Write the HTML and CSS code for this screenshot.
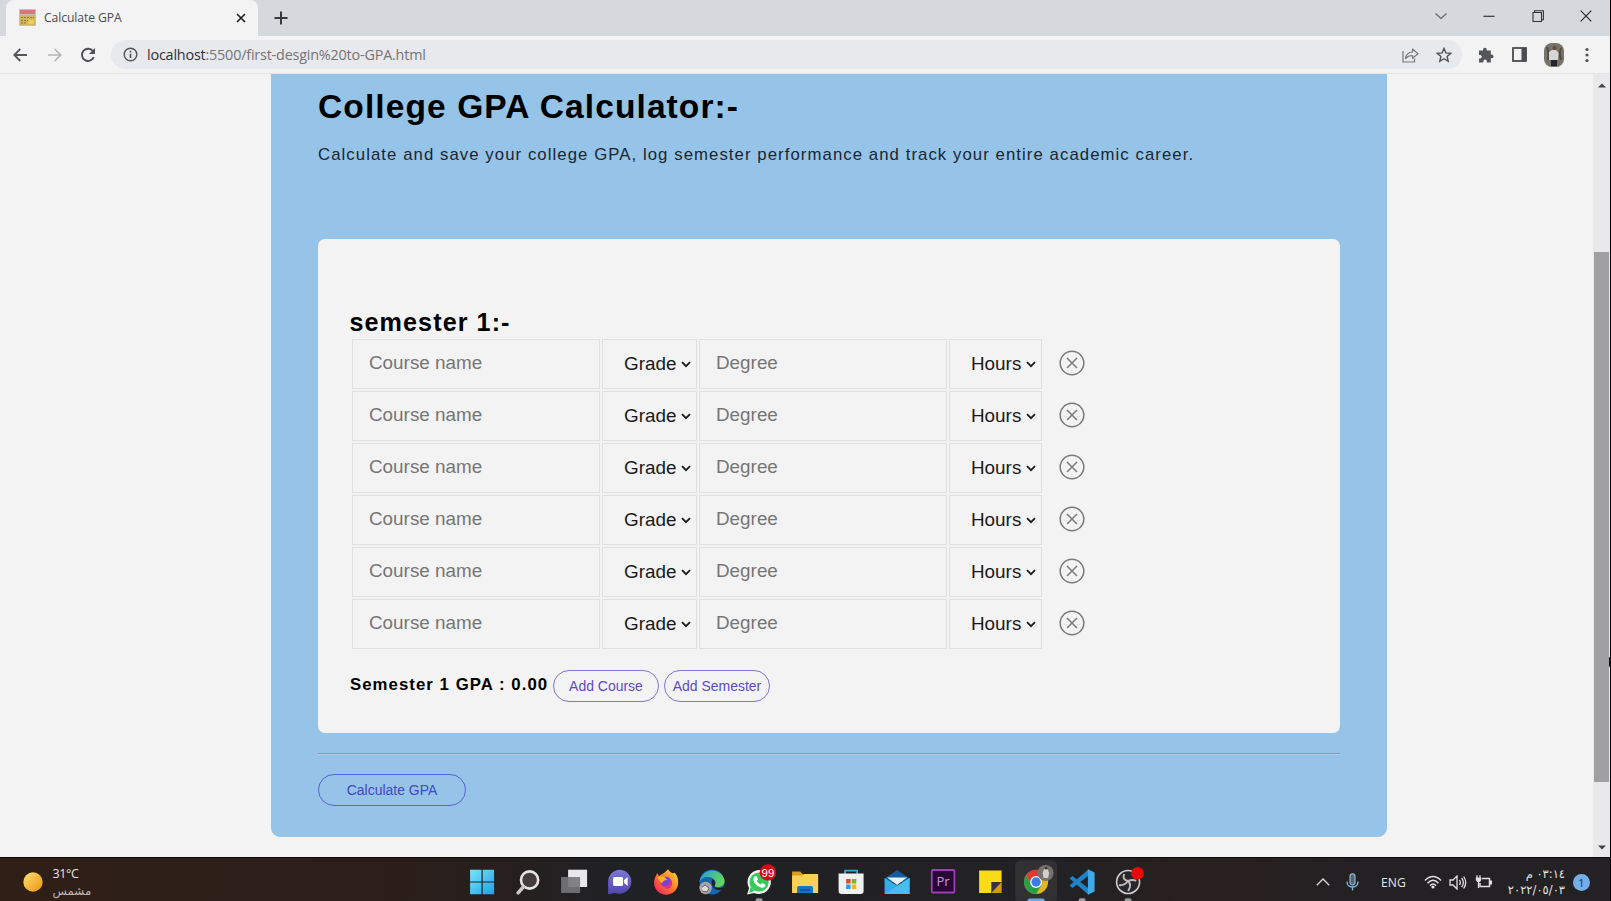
FILE: index.html
```html
<!DOCTYPE html>
<html lang="en">
<head>
<meta charset="utf-8">
<title>Calculate GPA</title>
<link rel="stylesheet" href="styles.css">
</head>
<body>
<div class="screen">
  <header class="tabs">
    <div class="tab">
      <svg class="favicon" width="17" height="17" viewBox="0 0 17 17"><rect width="17" height="17" rx="1" fill="#c9c0aa"/><rect x="1" y="1" width="15" height="4" fill="#d87583"/><path d="M1 6h15v10H1z" fill="#d3b75c"/><path d="M2 8.500h13M2 11.500h7M2 14h6" stroke="#8d7440" stroke-width="1.200" stroke-dasharray="2 1"/><rect x="9.500" y="11" width="5" height="4" fill="#f0cf58"/></svg>
      <span class="tab-title">Calculate GPA</span>
      <svg width="10" height="10" viewBox="0 0 10 10"><path d="M1 1l8 8M9 1l-8 8" stroke="#222" stroke-width="1.700"/></svg>
    </div>
    <svg class="plus" width="14" height="14" viewBox="0 0 14 14"><path d="M7 .5v13M.5 7h13" stroke="#38393c" stroke-width="2"/></svg>
    <div class="window-buttons">
      <svg width="12" height="12" viewBox="0 0 12 12"><path d="M.5 3.500l5.500 5 5.500-5" fill="none" stroke="#666" stroke-width="1.200"/></svg>
      <svg width="12" height="12" viewBox="0 0 12 12"><path d="M.5 6.300h11" stroke="#333" stroke-width="1.200"/></svg>
      <svg width="12" height="12" viewBox="0 0 12 12"><path d="M1 2.500h8.500v9H1zM2.500 2.500V.7H11.400v9H9.500" fill="none" stroke="#333" stroke-width="1.100"/></svg>
      <svg width="12" height="12" viewBox="0 0 12 12"><path d="M.7.7l10.600 10.600M11.300.7L.7 11.300" stroke="#222" stroke-width="1.100"/></svg>
    </div>
  </header>
  <nav class="toolbar">
    <svg class="back" width="15" height="14" viewBox="0 0 15 14"><path d="M14 7H1.500M7.300 1L1.300 7l6 6" fill="none" stroke="#55565a" stroke-width="1.800"/></svg>
    <svg class="forward" width="15" height="14" viewBox="0 0 15 14"><path d="M1 7h12.500M7.700 1l6 6-6 6" fill="none" stroke="#b4b5b8" stroke-width="1.700"/></svg>
    <svg class="reload" width="16" height="16" viewBox="0 0 16 16"><path d="M13.700 10.200A6.100 6.100 0 1 1 13 4.200" fill="none" stroke="#505155" stroke-width="1.900"/><path d="M15 1v6H9z" fill="#505155"/></svg>
    <div class="omnibox">
      <svg width="15" height="15" viewBox="0 0 15 15"><circle cx="7.500" cy="7.500" r="6.300" fill="none" stroke="#55565a" stroke-width="1.500"/><path d="M7.500 6.700v4.300M7.500 3.700v1.700" stroke="#55565a" stroke-width="1.700"/></svg>
      <span class="url"><b>localhost</b>:5500/first-desgin%20to-GPA.html</span>
      <svg class="share" width="17" height="16" viewBox="0 0 17 16"><path d="M1 4v11h11.500v-3.500" fill="none" stroke="#77787b" stroke-width="1.200"/><path d="M3.500 11.500C4 7.500 6.500 5.200 10.500 5V2l5.500 4.700-5.500 4.600V8.500C7.200 8.500 5.200 9.500 3.500 11.500z" fill="none" stroke="#77787b" stroke-width="1.200" stroke-linejoin="round"/></svg>
      <svg width="16" height="16" viewBox="0 0 16 16"><path d="M8 1.400l1.900 4.500 4.900.4-3.700 3.200 1.100 4.800L8 11.700l-4.200 2.600 1.100-4.800L1.200 6.300l4.900-.4z" fill="none" stroke="#505155" stroke-width="1.400"/></svg>
    </div>
    <svg class="puzzle" width="16" height="16" viewBox="0 0 16 16"><path d="M1 3.500h4V2.700a1.900 1.900 0 0 1 3.800 0v.8h4v4h.8a1.900 1.900 0 0 1 0 3.800h-.8V15.500H8.800V14.300a1.700 1.700 0 0 0-3.400 0v1.200H1v-4h1a1.800 1.800 0 0 0 0-3.600H1z" fill="#55565a"/></svg>
    <svg class="panel" width="15" height="15" viewBox="0 0 15 15"><rect x="1" y="1" width="13" height="13" fill="none" stroke="#4c4d51" stroke-width="1.800"/><rect x="9.500" y="1" width="5" height="13" fill="#4c4d51"/></svg>
    <svg class="avatar" width="20" height="24" viewBox="0 0 20 24"><rect width="20" height="24" rx="8" fill="#77736a"/><path d="M3 4q2 5 1 13M17 5q-2 5 0 12" stroke="#4f4c45" stroke-width="2" fill="none"/><path d="M7 15h6v8H7z" fill="#24252e"/><path d="M5 9l3-2h4l2.500 3-.5 7H5z" fill="#d4d5d7"/><circle cx="10.500" cy="5" r="2" fill="#684939"/></svg>
    <svg width="4" height="16" viewBox="0 0 4 16"><g fill="#505155"><circle cx="2" cy="2.500" r="1.600"/><circle cx="2" cy="8" r="1.600"/><circle cx="2" cy="13.500" r="1.600"/></g></svg>
  </nav>
  <div class="viewport">
    <main class="calculator">
      <h1>College GPA Calculator:-</h1>
      <p class="intro">Calculate and save your college GPA, log semester performance and track your entire academic career.</p>
      <section class="card">
        <h2>semester 1:-</h2>
        <div class="rows" id="rows"></div>
        <div class="summary">
          <span class="gpa">Semester 1 GPA : 0.00</span>
          <button class="pill">Add Course</button>
          <button class="pill">Add Semester</button>
        </div>
      </section>
      <div class="rule"></div>
      <button class="pill pill-wide">Calculate GPA</button>
    </main>
    <aside class="scrollbar">
      <svg width="8" height="5" viewBox="0 0 8 5"><path d="M0 4.500L4 .5l4 4z" fill="#444"/></svg>
      <div class="track"><div class="thumb"></div></div>
      <svg width="8" height="5" viewBox="0 0 8 5"><path d="M0 .5l4 4 4-4z" fill="#444"/></svg>
      <svg class="pointer" width="3" height="14" viewBox="0 0 3 14"><path d="M3 0v14L1 11V3z" fill="#111"/></svg>
    </aside>
  </div>
  <footer class="taskbar">
    <div class="weather">
      <svg width="20" height="20" viewBox="0 0 20 20"><defs><linearGradient id="sun" x1="0" y1="0" x2="1" y2="1"><stop offset="0" stop-color="#fce070"/><stop offset="1" stop-color="#ee9412"/></linearGradient></defs><circle cx="10" cy="10" r="9.700" fill="url(#sun)"/></svg>
      <div class="weather-text"><span>31°C</span><span class="arabic" lang="ar" dir="rtl">مشمس</span></div>
    </div>
    <div class="apps">
      <svg viewBox="-23 -25 46 44"><defs><linearGradient id="win" x1="0" y1="0" x2="1" y2="1"><stop offset="0" stop-color="#7be6f8"/><stop offset="1" stop-color="#209fe9"/></linearGradient></defs><path d="M-12-12.300H-.6V-.6H-12zM.6-12.300H12V-.6H.6zM-12 .6H-.6V12.300H-12zM.6.6H12V12.300H.6z" fill="url(#win)"/></svg>
      <svg viewBox="-23 -25 46 44"><circle cx="1.500" cy="-2" r="8.600" fill="#453d3b" stroke="#e5e5e7" stroke-width="2.600"/><path d="M-4.800 5L-10 10.800" stroke="#c9c9cc" stroke-width="3.500" stroke-linecap="round"/></svg>
      <svg viewBox="-23 -25 46 44"><path d="M-6-12.300H13V5H-6z" fill="#e8e8ea"/><path d="M-13-5H6V11H-13z" fill="#77777a" opacity=".9"/></svg>
      <svg viewBox="-23 -25 46 44"><defs><linearGradient id="chat" x1="0" y1="0" x2="0" y2="1"><stop offset="0" stop-color="#7c78d6"/><stop offset="1" stop-color="#5046ac"/></linearGradient></defs><path d="M0-12.300a12 12 0 1 1-5 23.200L-12 12.300V0A12 12 0 0 1 0-12.300z" fill="url(#chat)"/><rect x="-7" y="-5" width="10" height="9" rx="1.500" fill="#fff"/><path d="M4-2L7.500-5V4L4 1z" fill="#fff"/></svg>
      <svg viewBox="-23 -25 46 44"><defs><linearGradient id="fox" x1="1" y1="0" x2="0" y2="1"><stop offset="0" stop-color="#ffe43c"/><stop offset=".45" stop-color="#ff8228"/><stop offset="1" stop-color="#ef1768"/></linearGradient></defs><path d="M2-12.800C4-9 8-8 8.500-9.500 12-5 12.300-2 12 1A12 11.700 0 0 1-12 1c0-5 2-7 3-10l2 3 2-1.500c2-1 4-2 7-5.300z" fill="url(#fox)"/><circle cx="0" cy="0" r="5.300" fill="#7845d2"/><path d="M-9-5C-4-7-1-5 1-2-2-2-3-1-4 1-6 0-8-3-9-5z" fill="#ffb12d"/><path d="M-3 3C0 5 5 2 4-3 8 0 6 7 0 7z" fill="#d93388"/></svg>
      <svg viewBox="-23 -25 46 44"><defs><linearGradient id="edge" x1="0" y1="0" x2="1" y2=".3"><stop offset="0" stop-color="#1f9ed9"/><stop offset="1" stop-color="#65d45a"/></linearGradient></defs><circle r="12.500" fill="#1565b6"/><path d="M-12.500 0A12.600 12.600 0 0 1 12.500-1C12.500 4 8 6 2 4.500 6 0 1-6-5-5-9-5-11-3-12.500 0z" fill="url(#edge)"/><path d="M0-3C5-1 3 3 2 5c4 2 9 1 10-1l-1 4C5 9-2 7 0-3z" fill="#202225"/><circle cx="-6.500" cy="6" r="6.200" fill="#aaa6a5"/><path d="M-10 5l3-2 4 3-2 4-5-1" fill="#ddd" stroke="#665b5a"/></svg>
      <svg viewBox="-23 -25 46 44"><path d="M0-12A12 12 0 1 1-5 11L-12 12.500-10 6A12 12 0 0 1 0-12z" fill="#f2f4f3"/><circle r="9.600" fill="#35ca5c"/><path d="M-10 11l1.500-6 4 4z" fill="#35ca5c"/><path d="M-4.500-5.500l2-.5 1.500 3.500-1.300 1.500Q-1 1.500 1.500 2.500L3 1l3.500 1.700Q6 6 2.500 5.800-3.500 4.500-5.600-1.500-6-4-4.500-5.500z" fill="#fff"/><circle cx="8.800" cy="-9.500" r="8.300" fill="#d40c17"/><text x="8.800" y="-5.500" class="badge-text">99</text><rect x="-3.500" y="16.200" width="7" height="4" rx="2" fill="#9b9b9d"/></svg>
      <svg viewBox="-23 -25 46 44"><path d="M-13-10.500h8l3 3H13V11H-13z" fill="#dc9d22"/><path d="M-13-6.500H-3l2-1.500H13V11H-13z" fill="#f8d15a"/><path d="M-8 11V6q0-2 2-2H6q2 0 2 2v5z" fill="#1b77bd"/><path d="M-5 8H5" stroke="#0f4f8c" stroke-width="1.500"/></svg>
      <svg viewBox="-23 -25 46 44"><path d="M-6-7v-4.300H6V-7" fill="none" stroke="#39a7d0" stroke-width="1.800"/><path d="M-12.500-8.500h25V9q0 3-3 3h-19q-3 0-3-3z" fill="#eff0f0"/><path d="M-5-3h4.500v4.500H-5z" fill="#e44b2c"/><path d="M.7-3h4.500v4.500H.7z" fill="#7bb526"/><path d="M-5 2.500h4.500V7H-5z" fill="#2b9fe0"/><path d="M.7 2.500h4.500V7H.7z" fill="#f2b31c"/></svg>
      <svg viewBox="-23 -25 46 44"><path d="M-12.500-3.500L0-12 12.500-3.500V0h-25z" fill="#145c9f"/><path d="M-10-4.500H10L0 3z" fill="#e5eff6"/><path d="M-12.500-4L0 3.500 12.500-4V12h-25z" fill="#35aee8"/><path d="M-12.500 12L12.500-4V12z" fill="#4fc4f4" opacity=".7"/></svg>
      <svg viewBox="-23 -25 46 44"><rect x="-11.300" y="-12" width="22.600" height="22.500" rx="1" fill="#270733" stroke="#9a3fb5" stroke-width="1.800"/><text x="0" y="4.200" class="pr-text">Pr</text></svg>
      <svg viewBox="-23 -25 46 44"><path d="M-11-11.500H11.500V0L.8 11H-11z" fill="#f9dc16"/><path d="M1.200 0H11.500L1.200 11z" fill="#33363c"/><path d="M11.500 0v11H1.200z" fill="#d39b13"/></svg>
      <svg viewBox="-23 -25 46 44"><rect x="-21" y="-21.500" width="42" height="42" rx="5" fill="#313033"/><circle r="12" fill="#e4b51e"/><path d="M0 0L-10.400 6A12 12 0 0 0 0 12L5.500 3z" fill="#2b9c49"/><path d="M-10.400 6A12 12 0 0 1-10-7L-4.500 3z" fill="#2b9c49"/><path d="M-10-7A12 12 0 0 1 11-5H0L-4.500 3z" fill="#dc3c33"/><circle r="5.900" fill="#fff"/><circle r="4.700" fill="#3b7fe6"/><circle cx="9.500" cy="-9" r="8" fill="#77736c"/><path d="M6.500-9l1.500-4h3.500l1.500 4-1 5H7.500z" fill="#cfd0d1"/><circle cx="10" cy="-14" r="1.500" fill="#4d3a31"/><rect x="-8.500" y="16.500" width="17" height="4" rx="2" fill="#6caae8"/></svg>
      <svg viewBox="-23 -25 46 44"><path d="M6.500-12.700V12.700L-12.500-3.500l2.800-2.400L6 6V-6L-9.700 5.900-12.500 3.500z" fill="#2083c7"/><path d="M5.800-12.700L12.500-9.500V9.500L5.800 12.700z" fill="#40a9e8"/><rect x="-3.500" y="16.200" width="7" height="4" rx="2" fill="#9b9b9d"/></svg>
      <svg viewBox="-23 -25 46 44"><circle r="11.500" fill="#29272a" stroke="#cfcfd1" stroke-width="1.600"/><path d="M-4-8Q-6-2 0-1 5-3 8-1M0-1Q4 3 0 9M0-1Q-4 4-9 3" fill="none" stroke="#bbbbbd" stroke-width="2"/><circle cx="9.500" cy="-8.800" r="6.300" fill="#e80a0a"/><rect x="-3.500" y="16.200" width="7" height="4" rx="2" fill="#9b9b9d"/></svg>
    </div>
    <div class="tray">
      <svg class="up" width="14" height="8" viewBox="0 0 14 8"><path d="M.8 7.300L7 1l6.200 6.300" fill="none" stroke="#d8d8da" stroke-width="1.300"/></svg>
      <svg class="mic" width="13" height="18" viewBox="0 0 13 18"><rect x="4" y=".8" width="5" height="11" rx="2.500" fill="#55626f" stroke="#8ab8dc" stroke-width="1.200"/><path d="M1 8.500q0 5.500 5.500 5.500T12 8.500M6.500 14v3.500" fill="none" stroke="#8ab8dc" stroke-width="1.300"/></svg>
      <span class="lang">ENG</span>
      <svg class="wifi" width="18" height="14" viewBox="0 0 18 14"><g fill="none" stroke="#e0e0e2" stroke-width="1.500"><path d="M1 5.500Q9-2.500 17 5.500M3.500 8.200Q9 2.500 14.500 8.200M6 10.700Q9 7.500 12 10.700"/></g><circle cx="9" cy="12" r="1.600" fill="#e0e0e2"/></svg>
      <svg class="volume" width="18" height="15" viewBox="0 0 18 15"><g fill="none" stroke="#e0e0e2" stroke-width="1.300"><path d="M1 5h3l4-4v13l-4-4H1zM10.500 5q1.700 2.500 0 5M12.700 3q3.200 4.500 0 9M14.700 1.500q4 6 0 12"/></g></svg>
      <svg class="battery" width="18" height="14" viewBox="0 0 18 14"><path d="M7 3.500h7.500v8H5V8" fill="none" stroke="#e0e0e2" stroke-width="1.500"/><path d="M16 5.500v4" stroke="#e0e0e2" stroke-width="2"/><path d="M2 .3V3M5 .3V3M3.500 6v7" stroke="#e0e0e2" stroke-width="1.300"/><path d="M.8 2.500h5.400V5L5 7H2L.8 5z" fill="#e0e0e2"/></svg>
      <div class="clock"><bdo dir="ltr" lang="ar">م ٠٣:١٤</bdo><bdo dir="ltr" lang="ar">٢٠٢٢/٠٥/٠٣</bdo></div>
      <span class="count">1</span>
    </div>
  </footer>
</div>
<template id="row">
  <div class="row">
    <div class="cell course">Course name</div>
    <div class="cell select grade"><span>Grade</span><svg width="10" height="7" viewBox="0 0 10 7"><path d="M1 1.200l4 4 4-4" fill="none" stroke="#1c1c1e" stroke-width="1.800"/></svg></div>
    <div class="cell degree">Degree</div>
    <div class="cell select hours"><span>Hours</span><svg width="10" height="7" viewBox="0 0 10 7"><path d="M1 1.200l4 4 4-4" fill="none" stroke="#1c1c1e" stroke-width="1.800"/></svg></div>
    <svg class="remove" width="26" height="26" viewBox="0 0 26 26"><circle cx="13" cy="13" r="11.800" fill="none" stroke="#7b7979" stroke-width="1.500"/><path d="M8 8l10 10M18 8L8 18" stroke="#7b7979" stroke-width="1.500"/></svg>
  </div>
</template>
<script src="rows.js"></script>
</body>
</html>
```
FILE: rows.js
```js
const template = document.getElementById('row');
const rows = document.getElementById('rows');
for (let i = 0; i < 6; i += 1) {
  rows.append(template.content.cloneNode(true));
}
```
FILE: styles.css
```css
* { box-sizing: border-box; }
body { margin: 0; overflow: hidden; }
svg { display: block; flex: none; }
h1, h2, p { margin: 0; }

.screen {
  display: flex;
  flex-direction: column;
  width: 1611px;
  height: 901px;
  border-right: 1px solid #000;
  background: #f3f3f3;
  font-family: "Liberation Sans", Arial, sans-serif;
}

/* Browser chrome */
.tabs { display: flex; height: 36px; background: #d5d8dd; }
.tab {
  display: flex;
  align-items: center;
  width: 252px;
  margin-left: 6px;
  padding: 0 12px 1px 13px;
  border-radius: 8px 8px 0 0;
  background: #f3f3f3;
}
.tab-title {
  flex: 1;
  margin-left: 8px;
  font: 12.2px "Open Sans", sans-serif;
  letter-spacing: -.1px;
  color: #4b4b4e;
}
.plus { margin: 11px 0 0 16px; }
.window-buttons { display: flex; gap: 36.300px; margin: 10px 18px 0 auto; }
.toolbar {
  display: flex;
  align-items: center;
  height: 38px;
  padding: 0 20px 0 13px;
  border-bottom: 1px solid #e2e3e5;
}
.forward { margin-left: 19px; }
.reload { margin-left: 18px; }
.omnibox {
  display: flex;
  align-items: center;
  width: 1351px;
  height: 29px;
  margin-left: 15px;
  padding: 0 10px 0 12px;
  border-radius: 15px;
  background: #e8e9ec;
}
.url {
  flex: 1;
  margin-left: 9px;
  font: 14.400px "Open Sans", sans-serif;
  letter-spacing: -.2px;
  color: #737477;
}
.url b { font-weight: 400; color: #303033; }
.share { margin-right: 17px; }
.puzzle { margin-left: 16px; }
.panel { margin-left: 18px; }
.avatar { margin: 0 21px 0 17px; }

/* Page */
.viewport { display: flex; height: 783px; }
.calculator {
  width: 1116px;
  height: 763px;
  margin-left: 271px;
  padding: 14px 47px 0;
  border-radius: 0 0 9px 9px;
  background: #95c4e8;
}
h1 { font-size: 33.560px; line-height: 38px; letter-spacing: 1.080px; }
.intro { margin-top: 19px; font-size: 16.780px; line-height: 20px; letter-spacing: 1.058px; color: #1b2630; }
.card {
  height: 494px;
  margin-top: 74px;
  padding: 68px 32px 0;
  border-radius: 7px;
  background: #f3f3f3;
}
h2 { margin-left: -.5px; font-size: 25.170px; line-height: 30px; letter-spacing: 1.070px; }
.rows { display: grid; grid-auto-rows: 50px; row-gap: 2.060px; margin-top: 2px; padding-left: 2px; }
.row { display: flex; gap: 2px; align-items: center; }
.cell {
  display: flex;
  align-items: center;
  height: 50px;
  padding: 0 0 2px 16px;
  border: 1px solid #e0e0e3;
  font-size: 18.880px;
  color: #767676;
}
.course, .degree { width: 248px; }
.select { justify-content: space-between; padding: 0 5px 0 21px; color: #1a1a1c; }
.grade { width: 95px; }
.hours { width: 93px; }
.remove { margin: 0 0 2px 15px; }
.summary { display: flex; margin-top: 21px; }
.gpa { width: 203px; margin-right: 0; font-size: 16.780px; font-weight: 700; line-height: 30px; letter-spacing: 1.050px; white-space: nowrap; }
.pill {
  width: 106px;
  height: 32px;
  margin: 0 5px 0 0;
  padding: 0;
  border: 1.300px solid #8274cf;
  border-radius: 16px;
  background: none;
  font: 13.980px "Liberation Sans", Arial, sans-serif;
  color: #5d4bc4;
}
.rule { margin: 20px 0 19px; height: 2px; border-top: 1px solid #879cb0; border-bottom: 1px solid #b0cfea; }
.pill-wide { width: 148px; border-color: #5a65cf; color: #4547c2; }

.scrollbar {
  position: relative;
  display: flex;
  flex-direction: column;
  align-items: center;
  width: 17px;
  margin-left: auto;
  padding: 9px 0 7px;
  background: #e9e8ea;
}
.track { flex: 1; width: 15px; padding-top: 164px; }
.thumb { height: 530px; background: #a0a0a2; }
.pointer { position: absolute; right: -1px; top: 581px; }

/* Taskbar */
.taskbar {
  display: flex;
  height: 44px;
  border-top: 1px solid #0c0a0a;
  background: linear-gradient(90deg, #2f1f17, #2b1e19 25%, #202124 38%, #222123 66%, #291f1f 74%, #232124 85%);
  color: #e6e4e4;
}
.weather { display: flex; gap: 10px; width: 458.500px; padding: 14px 0 0 22.500px; }
.weather-text { display: flex; flex-direction: column; margin-top: -7px; font: 12.500px/17px "Open Sans", sans-serif; letter-spacing: -.4px; }
.arabic { font: 11.800px/19px "DejaVu Sans", sans-serif; letter-spacing: 0; color: #bdb7b4; }
.apps { display: flex; margin-top: -1px; }
.apps svg { width: 46.200px; height: 44px; }
.badge-text { font: 11.500px "Liberation Sans", sans-serif; text-anchor: middle; fill: #fff; }
.pr-text { font: 13px "Open Sans", sans-serif; text-anchor: middle; fill: #d291e8; }
.tray { display: flex; align-items: center; margin-left: auto; padding-right: 20px; height: 48px; }
.mic { margin-left: 16px; }
.lang { width: 26px; margin-left: 22px; font: 12.200px "Open Sans", sans-serif; }
.wifi { margin-left: 17px; }
.volume { margin-left: 7px; }
.battery { margin-left: 8px; }
.clock { display: flex; flex-direction: column; align-items: flex-end; width: 60px; margin-left: 12px; font: 11.500px/16px "DejaVu Sans", sans-serif; }
.count {
  width: 17px;
  height: 17px;
  margin-left: 8px;
  border-radius: 50%;
  background: #73aeea;
  font: 11px/17px "Open Sans", sans-serif;
  text-align: center;
  color: #1d2a3a;
}
```
